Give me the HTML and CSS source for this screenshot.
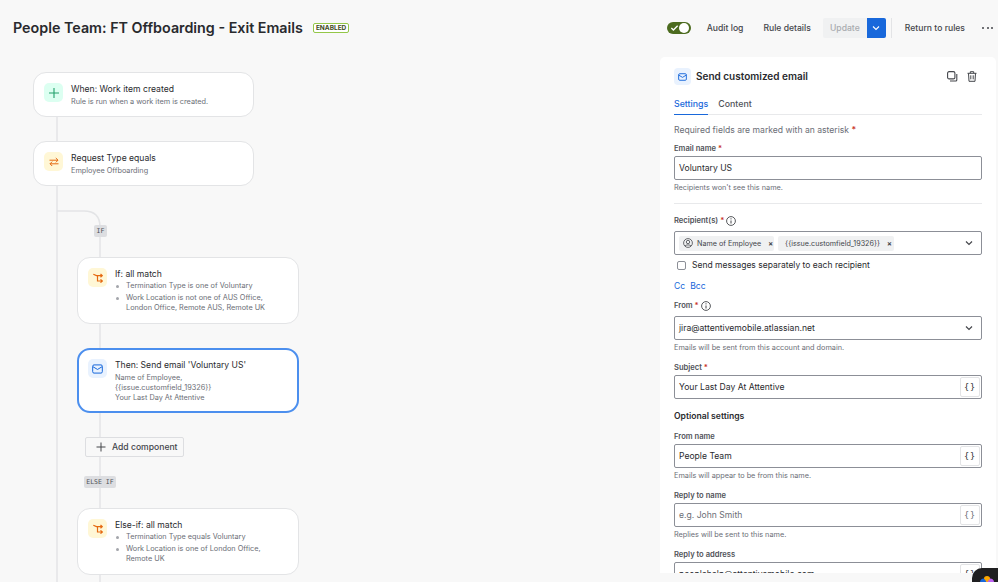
FILE: index.html
```html
<!doctype html>
<html lang="en">
<head>
  <meta charset="UTF-8">
  <title>People Team: FT Offboarding - Exit Emails</title>
  <link rel="stylesheet" href="styles.css">
</head>
<body>
<header class="top">
  <h1>People Team: FT Offboarding - Exit Emails</h1>
  <span class="lozenge">ENABLED</span>
  <div class="actions">
    <span class="toggle">
      <svg width="9" height="8" viewBox="0 0 10 8"><path d="M1.500 4l2.300 2.300L8.500 1.600" fill="none" stroke="#fff" stroke-width="1.500"/></svg>
      <i></i>
    </span>
    <a class="audit">Audit log</a>
    <a class="details">Rule details</a>
    <span class="update">Update</span>
    <span class="update-more">
      <svg width="8" height="6" viewBox="0 0 8 6"><path d="M1 1.500l3 3 3-3" fill="none" stroke="#fff" stroke-width="1.100"/></svg>
    </span>
    <span class="sep"></span>
    <a class="return">Return to rules</a>
    <span class="dots"><i></i><i></i><i></i></span>
  </div>
</header>

<main class="main">
  <section class="canvas">
    <svg class="wires" width="660" height="526" viewBox="0 0 660 526">
      <path d="M57 60V526M57 154H84Q100 154 100 170V526" fill="none" stroke="#e3e4e6" stroke-width="1.500"/>
    </svg>

    <div class="node n1">
      <span class="ico green">
        <svg width="12" height="12" viewBox="0 0 12 12"><path d="M6 1v10M1 6h10" stroke="#22a06b" stroke-width="1.100"/></svg>
      </span>
      <div>
        <h3>When: Work item created</h3>
        <p>Rule is run when a work item is created.</p>
      </div>
    </div>

    <div class="node n2">
      <span class="ico yellow">
        <svg width="10" height="10" viewBox="0 0 10 10"><path d="M.5 3.200H9M6.800 1L9 3.200 6.800 5.400M9.500 6.800H1M3.200 4.600 1 6.800 3.200 9" fill="none" stroke="#e56910" stroke-width="1"/></svg>
      </span>
      <div>
        <h3>Request Type equals</h3>
        <p>Employee Offboarding</p>
      </div>
    </div>

    <span class="tag tag-if">IF</span>

    <div class="node n3">
      <span class="ico yellow">
        <svg width="10" height="10" viewBox="0 0 10 10"><path d="M.3 1.300L3.500 2.600H9M4.500 2.600V8H9M7.500 1L9.300 2.600 7.500 4.200M7.500 6.400L9.300 8 7.500 9.600" fill="none" stroke="#e56910" stroke-width="1.200"/></svg>
      </span>
      <div>
        <h3>If: all match</h3>
        <ul>
          <li>Termination Type is one of Voluntary</li>
          <li>Work Location is not one of AUS Office, London Office, Remote AUS, Remote UK</li>
        </ul>
      </div>
    </div>

    <div class="node n4 selected">
      <span class="ico blue">
        <svg width="11" height="10" viewBox="0 0 12 11"><rect x=".7" y="1" width="10.600" height="9" rx="1.500" fill="none" stroke="#1868db" stroke-width="1.100"/><path d="M1 3l5 3 5-3" fill="none" stroke="#1868db" stroke-width="1.100"/></svg>
      </span>
      <div>
        <h3>Then: Send email 'Voluntary US'</h3>
        <p>Name of Employee,<br>{{issue.customfield_19326}}<br>Your Last Day At Attentive</p>
      </div>
    </div>

    <button class="add">
      <svg width="10" height="10" viewBox="0 0 10 10"><path d="M5 .5v9M.5 5h9" stroke="#44464b" stroke-width="1"/></svg>
      Add component
    </button>

    <span class="tag tag-else">ELSE IF</span>

    <div class="node n5">
      <span class="ico yellow">
        <svg width="10" height="10" viewBox="0 0 10 10"><path d="M.3 1.300L3.500 2.600H9M4.500 2.600V8H9M7.500 1L9.300 2.600 7.500 4.200M7.500 6.400L9.300 8 7.500 9.600" fill="none" stroke="#e56910" stroke-width="1.200"/></svg>
      </span>
      <div>
        <h3>Else-if: all match</h3>
        <ul>
          <li>Termination Type equals Voluntary</li>
          <li>Work Location is one of London Office, Remote UK</li>
        </ul>
      </div>
    </div>
  </section>

  <aside class="panel">
    <div class="panel-head">
      <span class="ico-sm">
        <svg width="9" height="8" viewBox="0 0 12 11"><rect x=".7" y="1" width="10.600" height="9" rx="1.500" fill="none" stroke="#1868db" stroke-width="1.300"/><path d="M1 3l5 3 5-3" fill="none" stroke="#1868db" stroke-width="1.300"/></svg>
      </span>
      <h2>Send customized email</h2>
      <span class="head-tools">
        <svg width="11" height="11" viewBox="0 0 11 11"><rect x=".6" y=".6" width="7.300" height="7.300" rx="1.500" fill="none" stroke="#44464b" stroke-width="1.100"/><path d="M9.800 3v6a1 1 0 0 1-1 1H3" fill="none" stroke="#44464b" stroke-width="1.100"/></svg>
        <svg width="10" height="11" viewBox="0 0 10 11"><path d="M.5 2.300h9M3.300 2.200V.7h3.400v1.500M1.500 2.300l.5 8h6l.5-8M3.800 4.300v4M6.200 4.300v4" fill="none" stroke="#44464b" stroke-width="1"/></svg>
      </span>
    </div>

    <div class="tabs">
      <span class="tab active">Settings</span>
      <span class="tab">Content</span>
    </div>

    <p class="required">Required fields are marked with an asterisk <b>*</b></p>

    <label class="lbl lbl-first">Email name <b>*</b></label>
    <div class="input">Voluntary US</div>
    <p class="help">Recipients won't see this name.</p>

    <hr class="rule">

    <label class="lbl lbl-info lbl-recipients">Recipient(s) <b>*</b>
      <svg class="info" width="10" height="10" viewBox="0 0 10 10"><circle cx="5" cy="5" r="4.400" fill="none" stroke="#44464b" stroke-width=".9"/><path d="M5 4.500v3M5 2.300v1.100" stroke="#44464b" stroke-width="1"/></svg>
    </label>
    <div class="input multi">
      <span class="chip">
        <svg width="10" height="10" viewBox="0 0 10 10"><circle cx="5" cy="5" r="4.400" fill="none" stroke="#44464b" stroke-width=".8"/><circle cx="5" cy="4" r="1.700" fill="none" stroke="#44464b" stroke-width=".8"/><path d="M2 8c.6-1.500 5.400-1.500 6 0" fill="none" stroke="#44464b" stroke-width=".8"/></svg>
        Name of Employee <em>×</em>
      </span>
      <span class="chip chip-plain">{{issue.customfield_19326}} <em>×</em></span>
      <svg class="caret" width="8" height="6" viewBox="0 0 8 6"><path d="M1 1.500l3 3 3-3" fill="none" stroke="#44464b" stroke-width="1.200"/></svg>
    </div>
    <div class="check"><span class="box"></span>Send messages separately to each recipient</div>
    <div class="links"><a>Cc</a><a>Bcc</a></div>

    <label class="lbl lbl-info">From <b>*</b>
      <svg class="info" width="10" height="10" viewBox="0 0 10 10"><circle cx="5" cy="5" r="4.400" fill="none" stroke="#44464b" stroke-width=".9"/><path d="M5 4.500v3M5 2.300v1.100" stroke="#44464b" stroke-width="1"/></svg>
    </label>
    <div class="input after-info">jira@attentivemobile.atlassian.net
      <svg class="caret" width="8" height="6" viewBox="0 0 8 6"><path d="M1 1.500l3 3 3-3" fill="none" stroke="#44464b" stroke-width="1.200"/></svg>
    </div>
    <p class="help">Emails will be sent from this account and domain.</p>

    <label class="lbl">Subject <b>*</b></label>
    <div class="input">Your Last Day At Attentive<span class="smart">{}</span></div>

    <h4 class="optional">Optional settings</h4>

    <label class="lbl">From name</label>
    <div class="input">People Team<span class="smart">{}</span></div>
    <p class="help">Emails will appear to be from this name.</p>

    <label class="lbl">Reply to name</label>
    <div class="input placeholder">e.g. John Smith<span class="smart">{}</span></div>
    <p class="help">Replies will be sent to this name.</p>

    <label class="lbl">Reply to address</label>
    <div class="input">peoplehelp@attentivemobile.com<span class="smart">{}</span></div>
  </aside>
</main>

<span class="floating">
  <svg width="14" height="10" viewBox="0 0 14 10"><circle cx="4" cy="6.500" r="4" fill="#1868db"/><circle cx="10" cy="6.500" r="4" fill="#bf63f3"/><path d="M4 2.500a3 2.500 0 0 1 6 0L7 6.500z" fill="#fca700"/></svg>
</span>
</body>
</html>
```

FILE: styles.css
```css
* {
  margin: 0;
  padding: 0;
  box-sizing: border-box;
}

html, body {
  height: 582px;
  overflow: hidden;
}

body {
  position: relative;
  background: #f8f8f8;
  color: #292a2e;
  font-family: Inter, "Liberation Sans", sans-serif;
  font-size: 9px;
}

/* top bar */
.top {
  height: 57px;
  display: flex;
  align-items: center;
  padding: 0 5px 2px 13px;
}

.top h1 {
  font-size: 14.300px;
  font-weight: 600;
  color: #292a2e;
}

.lozenge {
  margin-left: 10px;
  padding: 0 2px;
  height: 10px;
  line-height: 8px;
  border: 1px solid #94c748;
  border-radius: 2px;
  background: #fff;
  font-size: 6.500px;
  font-weight: 700;
  color: #3d4a22;
}

.actions {
  margin-left: auto;
  display: flex;
  align-items: center;
  color: #44464b;
  font-size: 8.600px;
  font-weight: 500;
}

.toggle {
  width: 24px;
  height: 12px;
  padding: 0 1.500px 0 3px;
  border-radius: 6px;
  background: #4c6b1f;
  display: flex;
  align-items: center;
  justify-content: space-between;
}

.toggle i {
  width: 10px;
  height: 10px;
  border-radius: 50%;
  background: #fff;
}

.audit {
  margin-left: 16px;
}

.details {
  margin-left: 20px;
}

.update {
  margin-left: 12px;
  width: 44px;
  height: 20px;
  line-height: 20px;
  text-align: center;
  background: #f0f1f2;
  color: #a9abaf;
  border-radius: 2px 0 0 2px;
}

.update-more {
  width: 19px;
  height: 20px;
  background: #1868db;
  border-radius: 0 2px 2px 0;
  display: flex;
  align-items: center;
  justify-content: center;
}

.sep {
  width: 1px;
  height: 20px;
  margin: 0 13px 0 5px;
  background: #e3e4e6;
}

.dots {
  margin-left: 17px;
  width: 11px;
  display: flex;
  justify-content: space-between;
}

.dots i {
  width: 2px;
  height: 2px;
  border-radius: 50%;
  background: #44464b;
}

/* rule canvas */
.main {
  display: flex;
  height: 516px;
}

.canvas {
  position: relative;
  flex: 0 0 660px;
}

.wires {
  position: absolute;
  left: 0;
  top: 0;
}

.node {
  position: absolute;
  width: 221px;
  display: flex;
  gap: 8px;
  padding: 10px;
  background: #fff;
  border: 1px solid #e3e4e6;
  border-radius: 13px;
}

.n1 { left: 33px; top: 15px; height: 45px; }
.n2 { left: 33px; top: 84px; height: 45px; }
.n3 { left: 77px; top: 200px; width: 222px; height: 67px; }
.n4 { left: 77px; top: 291px; width: 222px; height: 65px; }
.n5 { left: 77px; top: 451px; width: 222px; height: 67px; }

.n2 p {
  margin-top: 1px;
}

.selected {
  padding: 9px;
  border: 2px solid #4c8fee;
}

.ico {
  flex: none;
  width: 19px;
  height: 19px;
  border-radius: 5px;
  display: flex;
  align-items: center;
  justify-content: center;
}

.green { background: #dcfff1; }
.yellow { background: #fff7d6; }
.blue { background: #e9f2fe; }

.node h3 {
  font-size: 8.600px;
  font-weight: 400;
  line-height: 12px;
  color: #292a2e;
}

.node p {
  font-size: 7.300px;
  line-height: 10px;
  margin-top: 1.500px;
  color: #6b6e76;
}

.node ul {
  list-style: none;
  font-size: 7.300px;
  line-height: 10px;
  color: #6b6e76;
}

.node li {
  position: relative;
  padding-left: 11px;
  margin-top: 2px;
}

.node li:first-child {
  margin-top: 1px;
}

.node li::before {
  content: "";
  position: absolute;
  left: 1px;
  top: 3.500px;
  width: 3px;
  height: 3px;
  border-radius: 50%;
  background: #a3a5ab;
}

.tag {
  position: absolute;
  height: 12px;
  line-height: 12px;
  background: #dddee1;
  border-radius: 2px;
  font-family: "DejaVu Sans Mono", monospace;
  font-size: 6.500px;
  color: #505258;
  text-align: center;
}

.tag-if { left: 94px; top: 168px; width: 13px; }
.tag-else { left: 84px; top: 419px; width: 32px; }

.add {
  position: absolute;
  left: 85px;
  top: 380px;
  width: 99px;
  height: 20px;
  display: flex;
  align-items: center;
  gap: 6px;
  padding-left: 10px;
  background: #f8f8f8;
  border: 1px solid #dddee1;
  border-radius: 2px;
  font: 500 8.600px Inter, "Liberation Sans", sans-serif;
  color: #44464b;
}

/* side panel */
.panel {
  width: 336px;
  height: 516px;
  overflow: hidden;
  padding: 11px 14px 0;
  background: #fff;
  border-radius: 5px 5px 0 0;
}

.panel-head {
  display: flex;
  align-items: center;
  height: 17px;
}

.ico-sm {
  width: 17px;
  height: 17px;
  border-radius: 4px;
  background: #e9f2fe;
  display: flex;
  align-items: center;
  justify-content: center;
}

.panel-head h2 {
  margin: 0 0 2px 5px;
  font-size: 10px;
  font-weight: 600;
}

.head-tools {
  margin-left: auto;
  margin-right: 5px;
  display: flex;
  gap: 9px;
}

.tabs {
  display: flex;
  gap: 10px;
  margin-top: 12px;
  height: 18px;
  border-bottom: 1px solid #e8e9eb;
  font-size: 8.800px;
  font-weight: 500;
  color: #505258;
}

.tab {
  height: 18px;
  line-height: 14px;
}

.tab.active {
  color: #1868db;
  border-bottom: 1.500px solid #1868db;
}

.required {
  margin-top: 10px;
  line-height: 11px;
  font-size: 8.600px;
  color: #6b6e76;
}

b {
  color: #c9372c;
  font-weight: 600;
}

.lbl {
  display: block;
  margin-top: 9px;
  height: 11px;
  line-height: 11px;
  font-size: 7.600px;
  font-weight: 600;
  color: #505258;
}

.lbl-first {
  margin-top: 7px;
}

.lbl-info {
  display: flex;
  align-items: center;
  gap: 2px;
  margin-top: 8px;
}

.lbl-recipients {
  margin-top: 11px;
}

.input {
  margin-top: 2px;
  height: 24px;
  display: flex;
  align-items: center;
  padding-left: 4px;
  border: 1px solid #8c8f97;
  border-radius: 2px;
  background: #fff;
  font-size: 8.600px;
  color: #292a2e;
}

.placeholder {
  color: #6b6e76;
}

.help {
  margin-top: 3px;
  height: 10px;
  line-height: 10px;
  font-size: 7.300px;
  color: #6b6e76;
}

.rule {
  margin-top: 10px;
  border: 0;
  border-top: 1px solid #e8e9eb;
}

.caret {
  margin-left: auto;
  margin-right: 8px;
}

.multi {
  margin-top: 5px;
  gap: 4px;
}

.after-info {
  margin-top: 5px;
}

.chip {
  display: flex;
  align-items: center;
  gap: 4px;
  height: 15px;
  padding: 0 1px 0 4px;
  background: #f0f1f2;
  border-radius: 2px;
  font-size: 7.200px;
  color: #44464b;
}

.chip-plain {
  padding: 0 2px 0 7px;
}

.chip em {
  font-style: normal;
  font-weight: 700;
  margin-left: 3px;
}

.check {
  display: flex;
  align-items: center;
  height: 12px;
  margin-top: 4px;
  padding-left: 3px;
  font-size: 8.500px;
  color: #292a2e;
}

.box {
  width: 9px;
  height: 9px;
  margin-right: 6px;
  border: 1px solid #8c8f97;
  border-radius: 2px;
}

.links {
  display: flex;
  gap: 5px;
  margin-top: 9px;
  height: 12px;
  line-height: 12px;
  font-size: 8.600px;
  color: #1868db;
}

.smart {
  margin-left: auto;
  margin-right: 1px;
  width: 20px;
  height: 20px;
  line-height: 18px;
  text-align: center;
  border: 1px solid #e3e4e6;
  border-radius: 2px;
  font-family: "DejaVu Sans Mono", monospace;
  font-size: 8.500px;
  letter-spacing: 1px;
}

.optional {
  margin-top: 11px;
  font-size: 8.600px;
  line-height: 12px;
  font-weight: 600;
}

.floating {
  position: absolute;
  left: 972px;
  top: 568px;
  width: 36px;
  height: 32px;
  padding: 8px 0 0 8px;
  border-radius: 10px;
  background: #1f1f21;
}
```
